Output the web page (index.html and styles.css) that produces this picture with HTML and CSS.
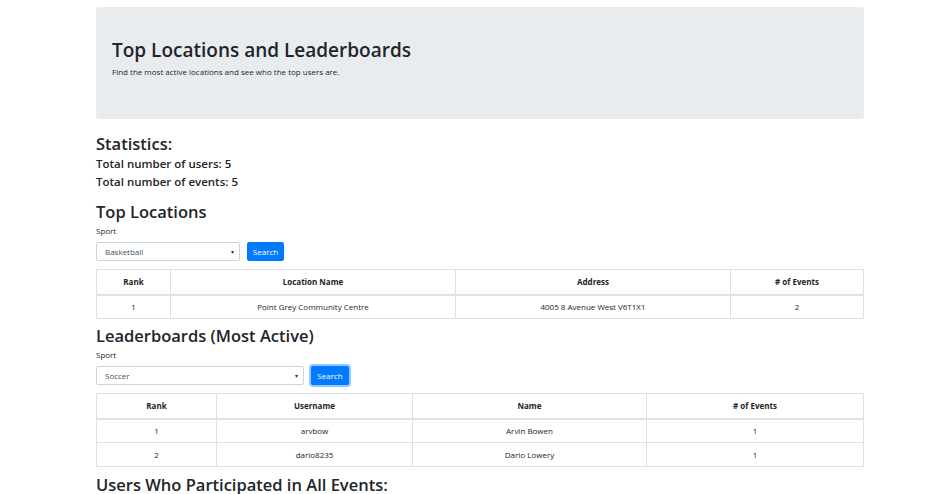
FILE: index.html
```html
<!DOCTYPE html>
<html>
<head>
<meta charset="utf-8">
<link rel="stylesheet" href="styles.css">
</head>
<body>
<div class="container">
  <div class="jumbotron">
    <h1 class="title">Top Locations and Leaderboards</h1>
    <p class="subtitle">Find the most active locations and see who the top users are.</p>
  </div>

  <h2 class="h2">Statistics:</h2>
  <h3 class="stat">Total number of users: 5</h3>
  <h3 class="stat">Total number of events: 5</h3>

  <h2 class="h2 section">Top Locations</h2>
  <label class="label">Sport</label>
  <div class="form-row">
    <div class="select sel-1"><span>Basketball</span><span class="caret">&#9662;</span></div>
    <button class="btn">Search</button>
  </div>
  <table class="table t1">
    <thead>
      <tr><th class="c1">Rank</th><th class="c2">Location Name</th><th class="c3">Address</th><th>#&nbsp;of Events</th></tr>
    </thead>
    <tbody>
      <tr><td>1</td><td>Point Grey Community Centre</td><td>4005 8 Avenue West V6T1X1</td><td>2</td></tr>
    </tbody>
  </table>

  <h2 class="h2 section2">Leaderboards (Most Active)</h2>
  <label class="label">Sport</label>
  <div class="form-row">
    <div class="select sel-2"><span>Soccer</span><span class="caret">&#9662;</span></div>
    <button class="btn focus">Search</button>
  </div>
  <table class="table t2">
    <thead>
      <tr><th class="d1">Rank</th><th class="d2">Username</th><th class="d3">Name</th><th>#&nbsp;of Events</th></tr>
    </thead>
    <tbody>
      <tr><td>1</td><td>arvbow</td><td>Arvin Bowen</td><td>1</td></tr>
      <tr><td>2</td><td>dario8235</td><td>Dario Lowery</td><td>1</td></tr>
    </tbody>
  </table>

  <h2 class="h2 section3">Users Who Participated in All Events:</h2>
</div>
</body>
</html>
```

FILE: styles.css
```css
* { box-sizing: border-box; }
html, body { margin: 0; padding: 0; background: #fff; }
body {
  font-family: "Open Sans", "Noto Sans", sans-serif;
  color: #212529;
  overflow: hidden;
  height: 494px;
}
.container {
  width: 768px;
  margin-left: 96px;
}
.jumbotron {
  margin-top: 7px;
  height: 112px;
  background: #e9ecef;
  border-radius: 3px;
  padding: 31px 16px 0;
}
.title {
  margin: 0 0 4px;
  font-size: 19px;
  font-weight: 600;
  line-height: 24px;
}
.subtitle {
  margin: 0;
  font-size: 8px;
  line-height: 12px;
}
.h2 {
  margin: 14px 0 2px;
  font-size: 16.5px;
  font-weight: 600;
  line-height: 21px;
}
.stat {
  margin: 0 0 2px;
  font-size: 11.5px;
  font-weight: 600;
  line-height: 16px;
}
.section { margin-top: 11px; }
.label {
  display: block;
  font-size: 8px;
  line-height: 12px;
  margin: 3px 0 5px;
}
.form-row {
  display: flex;
  gap: 7px;
  height: 19px;
  margin-bottom: 8px;
}
.select {
  height: 19px;
  border: 1px solid #ced4da;
  border-radius: 2px;
  background: #fff;
  display: flex;
  align-items: center;
  justify-content: space-between;
  padding: 0 5px 0 8px;
  font-size: 8px;
  color: #495057;
}
.caret { font-size: 6px; color: #333; }
.sel-1 { width: 144px; }
.sel-2 { width: 208px; }
.btn {
  height: 19px;
  width: 37px;
  padding: 0;
  border: 1px solid #007bff;
  background: #007bff;
  color: #fff;
  border-radius: 2px;
  font-family: inherit;
  font-size: 8px;
}
.btn.focus {
  width: 38px;
  box-shadow: 0 0 0 2px rgba(38, 143, 255, 0.5);
}
.table {
  width: 768px;
  border-collapse: collapse;
  font-size: 8px;
  text-align: center;
}
.table th, .table td {
  border: 1px solid #dee2e6;
  padding: 0;
}
.table th {
  height: 25px;
  font-weight: 700;
  border-bottom: 2px solid #dee2e6;
}
.table td { height: 24px; color: #212529; }
.t1 .c1 { width: 74px; }
.t1 .c2 { width: 285px; }
.t1 .c3 { width: 275px; }
.t2 .d1 { width: 120px; }
.t2 .d2 { width: 196px; }
.t2 .d3 { width: 234px; }
.section2 { margin-top: 6px; }
.section3 { margin-top: 7px; }
```
